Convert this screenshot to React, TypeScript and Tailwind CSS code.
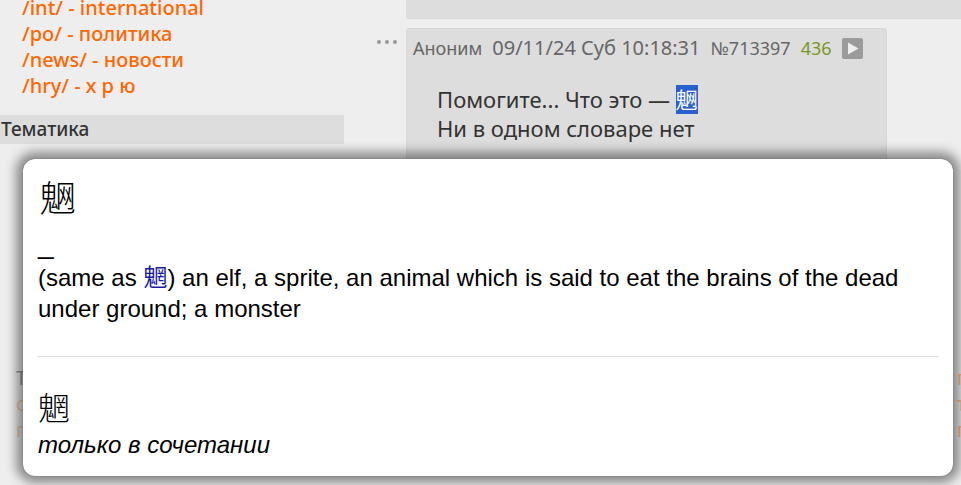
interface Board {
  path: string
  title: string
}

const boards: Board[] = [
  { path: '/int/', title: 'international' },
  { path: '/po/', title: 'политика' },
  { path: '/news/', title: 'новости' },
  { path: '/hry/', title: 'х р ю' },
]

function Sidebar() {
  return (
    <nav className="w-[344px] shrink-0">
      <ul className="-mt-[5px] pl-[22px] text-[20px] leading-[26px] font-medium">
        {boards.map((board) => (
          <li key={board.path}>
            <a href={board.path} className="text-[#ff6600]">
              {board.path} - {board.title}
            </a>
          </li>
        ))}
      </ul>
      <h2 className="mt-4 bg-[#dddddd] pl-px text-[19px] leading-[29px] font-medium text-[#333333]">
        Тематика
      </h2>
      <ul className="mt-[221px] pl-4 text-[19px] leading-[26px] text-[#f5c8a8]">
        <li className="text-[#999999]">Т</li>
        <li>с</li>
        <li>п</li>
      </ul>
    </nav>
  )
}

function Post() {
  return (
    <div className="mt-[9px] flex">
      <button type="button" aria-label="Меню поста" className="flex h-7 w-[29px] items-center gap-1">
        <span className="size-1 rounded-full bg-[#999999]" />
        <span className="size-1 rounded-full bg-[#999999]" />
        <span className="size-1 rounded-full bg-[#999999]" />
      </button>
      <article className="h-[180px] w-[481px] rounded-[3px] border border-[#d8d8d8] bg-[#dddddd]">
        <header className="flex items-center gap-2.5 pt-1.5 pl-1.5 text-[18px] leading-[26px] whitespace-nowrap text-[#666666]">
          <span>Аноним</span>
          <time className="text-[20px]">09/11/24 Суб 10:18:31</time>
          <a href="#713397">№713397</a>
          <a href="#436" className="text-[#789922]">436</a>
          <button type="button" aria-label="Ответить" className="size-[21px] rounded-[2px] bg-[#9b9b9b]">
            <svg viewBox="0 0 21 21" className="size-[21px]">
              <path d="M6 4.5L16.5 10.5L6 16.5Z" fill="#eeeeee" />
            </svg>
          </button>
        </header>
        <p className="pt-6 pl-[30px] text-[22px] leading-[29px] text-[#333333]">
          Помогите... Что это — <mark className="inline-block bg-[#2a5fd0] align-top text-white">䰣</mark>
          <br />
          Ни в одном словаре нет
        </p>
      </article>
    </div>
  )
}

function DictionaryPopup() {
  return (
    <section
      role="dialog"
      aria-label="Словарь"
      className="absolute top-[159px] right-2 left-[23px] rounded-xl bg-white px-[15px] pt-5 pb-4 font-['Liberation_Sans','Noto_Sans_CJK_SC',sans-serif] text-[24px] leading-[31px] text-black shadow-[0_0_1px_#333,0_0_11px_7px_rgba(0,0,0,0.42)]"
    >
      <h3 className="pl-0.5 text-[36px] leading-[42px] font-light">䰣</h3>
      <div className="mt-3 mb-2 text-[28px] leading-[21px]">_</div>
      <p>
        (same as <a href="#wang" className="text-[#1a1aa6]">魍</a>) an elf, a sprite, an animal which is said to eat the brains of the dead under ground; a monster
      </p>
      <hr className="mt-8 border-[#dddddd]" />
      <h3 className="mt-8 text-[32px] leading-[40px] font-light">魍</h3>
      <p className="italic">только в сочетании</p>
    </section>
  )
}

export default function App() {
  return (
    <div className="relative h-screen overflow-hidden bg-[#eeeeee] font-['Trebuchet_MS','Noto_Sans','Noto_Sans_CJK_SC',sans-serif]">
      <div className="flex">
        <Sidebar />
        <main className="min-w-0 grow pl-[33px]">
          <div className="ml-[29px] h-[19px] rounded-bl-[3px] border-b border-[#d8d8d8] bg-[#dddddd]" />
          <Post />
          <ul className="mt-[157px] ml-auto w-1 overflow-hidden text-[19px] leading-[26px] text-[#ffb88a]">
            <li>п</li>
            <li>т</li>
            <li>п</li>
          </ul>
        </main>
      </div>
      <DictionaryPopup />
    </div>
  )
}
